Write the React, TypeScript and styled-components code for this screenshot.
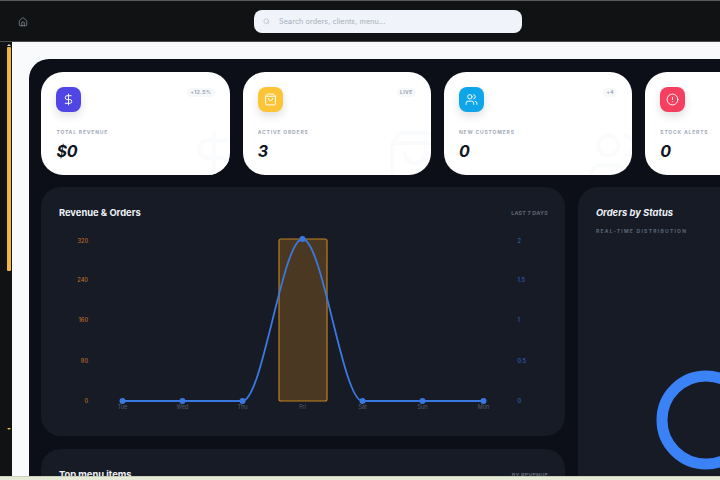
import React from "react";
import styled, { createGlobalStyle } from "styled-components";
import { Home, Search, DollarSign, ShoppingBag, Users, CircleAlert } from "lucide-react";

const Global = createGlobalStyle`
  html, body { margin: 0; padding: 0; background: #111213; }
  #root { width: 720px; height: 480px; overflow: hidden; }
  * { box-sizing: border-box; }
`;
const Page = styled.div`
  width: 720px; height: 480px; display: flex; flex-direction: column; overflow: hidden;
  font-family: Inter, "Liberation Sans", sans-serif;
`;
const TopBar = styled.header`
  height: 42px; flex: none; background: #111213; position: relative;
  border-top: 1px solid #5a5b5d; border-bottom: 1px solid #4a4b4d;
  display: flex; align-items: center; padding-left: 18px;
`;
const HomeButton = styled.div`
  width: 10px; height: 10px; color: #9aa3b2; display: flex; margin-right: 226px; margin-top: 1px;
`;
const SearchBox = styled.div`
  width: 268px; height: 23px; border-radius: 8px; background: #f0f3f9; margin-top: 1px;
  display: flex; align-items: center; gap: 9px; padding-left: 9px; color: #a6acb9;
  font-size: 7.2px; letter-spacing: 0.1px;
`;
const Body = styled.div`
  flex: 1; min-height: 0; display: flex; overflow: hidden;
`;
const Rail = styled.aside`
  width: 12px; flex: none; background: #111213; display: flex; flex-direction: column;
  align-items: flex-end; padding-right: 1px; padding-top: 2px;
`;
const Arrow = styled.div<{ $down?: boolean }>`
  width: 0; height: 0; margin-right: 0; border-left: 2px solid transparent; border-right: 2px solid transparent;
  ${(p) => (p.$down ? "border-top: 2px solid #f0b840; margin-top: 157px;" : "border-bottom: 2px solid #e8e0c8;")}
`;
const Thumb = styled.div`
  width: 4px; height: 224px; margin-top: 1px; border-radius: 1px; background: #f0b840;
`;
const Main = styled.main`
  flex: 1; min-width: 0; background: #f8fafc; padding: 17px 0 0 17px; overflow: hidden;
`;
const Dash = styled.div`
  width: 760px; height: 460px; background: #0c0f17; border-radius: 20px 0 0 0; padding: 13px 0 0 12.4px;
  display: flex; flex-direction: column; gap: 12px;
`;
const StatRow = styled.div`
  display: grid; grid-template-columns: repeat(4, 188.5px); column-gap: 12.8px;
`;
const Card = styled.section`
  height: 103px; border-radius: 22px; background: #fff; position: relative; overflow: hidden;
  padding: 15px 15px 0 15px;
`;
const CardTop = styled.div`
  display: flex; justify-content: space-between; align-items: flex-start;
`;
const Tile = styled.div<{ $c: string }>`
  width: 25px; height: 25px; border-radius: 8px; background: ${(p) => p.$c}; color: #fff;
  display: flex; align-items: center; justify-content: center;
  box-shadow: 0 4px 8px rgba(30, 30, 60, 0.14);
`;
const Badge = styled.span`
  font-size: 5px; font-weight: 700; letter-spacing: 0.4px; color: #9aa2b1; background: #f7f8fa;
  border-radius: 5px; padding: 2px 3.5px; line-height: 5px; margin-top: 1px;
`;
const StatLabel = styled.div`
  margin-top: 17px; font-size: 5px; font-weight: 700; letter-spacing: 0.82px; line-height: 6px; color: #a3aab8;
`;
const StatValue = styled.div`
  margin-top: 7px; font-size: 16px; font-weight: 700; font-style: italic; line-height: 18px; color: #11151f;
`;
const Ghost = styled.div`
  position: absolute; right: -14px; bottom: -13px; width: 60px; height: 60px; color: #fafbfc; display: flex;
`;
const Columns = styled.div`
  display: grid; grid-template-columns: 524px 240px; column-gap: 13px; align-items: start;
`;
const Stack = styled.div`
  display: flex; flex-direction: column; gap: 13px;
`;
const Panel = styled.section<{ $h: number }>`
  height: ${(p) => p.$h}px; background: #161b26; border-radius: 20px; padding: 19px 17.5px 0; overflow: hidden;
`;
const PanelHead = styled.div`
  display: flex; justify-content: space-between; align-items: center; height: 14px;
`;
const Title = styled.h2<{ $italic?: boolean }>`
  margin: -1px 0 0; font-size: 9.4px; font-weight: 700; color: #eef1f6; line-height: 14px;
  font-style: ${(p) => (p.$italic ? "italic" : "normal")};
`;
const Meta = styled.span`
  margin-top: -1px; font-size: 5.4px; font-weight: 700; color: #5e6675; letter-spacing: 0.2px;
`;
const Sub = styled.div`
  margin-top: 8px; font-size: 5px; font-weight: 700; letter-spacing: 1.25px; color: #5e6675; line-height: 6px;
`;
const Chart = styled.svg`
  display: block; margin: 8px 0 0 -17.5px; overflow: visible;
`;
const Donut = styled.svg`
  display: block; margin: 136px 0 0 60px; overflow: visible;
`;
const Strip = styled.div`
  height: 4px; flex: none; background: #e6ebd8; border-top: 1px solid #c9d0bd;
`;

const stats = [
  { label: "TOTAL REVENUE", value: "$0", badge: "+12.5%", color: "#4f46e5", Icon: DollarSign },
  { label: "ACTIVE ORDERS", value: "3", badge: "LIVE", color: "#fcc537", Icon: ShoppingBag },
  { label: "NEW CUSTOMERS", value: "0", badge: "+4", color: "#0ea5e9", Icon: Users },
  { label: "STOCK ALERTS", value: "0", badge: "", color: "#f43f5e", Icon: CircleAlert },
];
const xs = [
  ["Tue", 81.5], ["Wed", 141.5], ["Thu", 201.5], ["Fri", 261.5], ["Sat", 321.5], ["Sun", 381.5], ["Mon", 442.5],
] as const;
const rows = [
  ["320", "2", 13], ["240", "1.5", 52], ["160", "1", 92], ["80", "0.5", 133], ["0", "0", 173],
] as const;

export default function App() {
  return (
    <Page>
      <Global />
      <TopBar>
        <HomeButton><Home size={10} strokeWidth={1.6} /></HomeButton>
        <SearchBox><Search size={7} strokeWidth={1.8} />Search orders, clients, menu...</SearchBox>
      </TopBar>
      <Body>
        <Rail><Arrow /><Thumb /><Arrow $down /></Rail>
        <Main>
          <Dash>
            <StatRow>
              {stats.map(({ label, value, badge, color, Icon }) => (
                <Card key={label}>
                  <CardTop>
                    <Tile $c={color}><Icon size={13} strokeWidth={1.8} /></Tile>
                    {badge && <Badge>{badge}</Badge>}
                  </CardTop>
                  <StatLabel>{label}</StatLabel>
                  <StatValue>{value}</StatValue>
                  <Ghost><Icon size={60} strokeWidth={1.6} /></Ghost>
                </Card>
              ))}
            </StatRow>
            <Columns>
              <Stack>
                <Panel $h={249}>
                  <PanelHead><Title>Revenue &amp; Orders</Title><Meta>LAST 7 DAYS</Meta></PanelHead>
                  <Chart width="524" height="190" viewBox="0 0 524 190">
                    {rows.map(([l, r, y]) => (
                      <g key={l} fontSize="5.6" fontFamily="Inter, sans-serif" fontWeight="500">
                        <text x="47" y={y + 2} textAnchor="end" fill="#bf6d20">{l}</text>
                        <text x="476.5" y={y + 2} fill="#3560c4">{r}</text>
                      </g>
                    ))}
                    <rect x="238" y="11" width="48" height="162" rx="2" fill="#4a3823" stroke="#c0811f" strokeWidth="1.2" />
                    <path
                      d="M81.5 173H201.5C221.5 173 241.5 11 261.5 11C281.5 11 301.5 173 321.5 173H442.5"
                      fill="none" stroke="#3b78e0" strokeWidth="1.8"
                    />
                    {xs.map(([d, x]) => (
                      <g key={d}>
                        <circle cx={x} cy={d === "Fri" ? 11 : 173} r="3" fill="#3b78e0" />
                        <text x={x} y="181" textAnchor="middle" fontSize="5.6" fontFamily="Inter, sans-serif" fill="#565e6c">{d}</text>
                      </g>
                    ))}
                  </Chart>
                </Panel>
                <Panel $h={120}>
                  <PanelHead><Title>Top menu items</Title><Meta>BY REVENUE</Meta></PanelHead>
                </Panel>
              </Stack>
              <Panel $h={400}>
                <PanelHead><Title $italic>Orders by Status</Title></PanelHead>
                <Sub>REAL-TIME DISTRIBUTION</Sub>
                <Donut width="100" height="100" viewBox="0 0 100 100">
                  <circle cx="50" cy="50" r="44" fill="none" stroke="#3b82f6" strokeWidth="11" />
                </Donut>
              </Panel>
            </Columns>
          </Dash>
        </Main>
      </Body>
      <Strip />
    </Page>
  );
}
